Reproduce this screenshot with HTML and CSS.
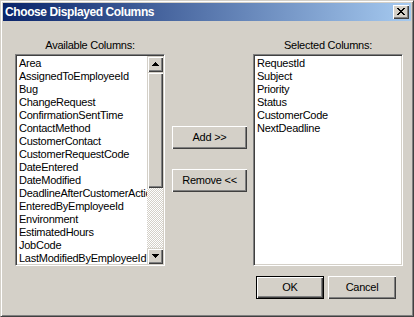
FILE: index.html
```html
<!DOCTYPE html>
<html>
<head>
<meta charset="utf-8">
<link rel="stylesheet" href="styles.css">
</head>
<body>
<div class="window">
  <div class="titlebar">
    <span class="title">Choose Displayed Columns</span>
    <div class="close"><svg width="8" height="7" viewBox="0 0 8 7" shape-rendering="crispEdges"><path d="M0 0h2v1H0zM6 0h2v1H6zM1 1h2v1H1zM5 1h2v1H5zM2 2h4v1H2zM3 3h2v1H3zM2 4h4v1H2zM1 5h2v1H1zM5 5h2v1H5zM0 6h2v1H0zM6 6h2v1H6z" fill="#000"/></svg></div>
  </div>
  <div class="body">
    <div class="columns">
      <div class="col">
        <div class="label">Available Columns:</div>
        <div class="listbox">
          <ul class="items">
            <li>Area</li>
            <li>AssignedToEmployeeId</li>
            <li>Bug</li>
            <li>ChangeRequest</li>
            <li>ConfirmationSentTime</li>
            <li>ContactMethod</li>
            <li>CustomerContact</li>
            <li>CustomerRequestCode</li>
            <li>DateEntered</li>
            <li>DateModified</li>
            <li>DeadlineAfterCustomerAction</li>
            <li>EnteredByEmployeeId</li>
            <li>Environment</li>
            <li>EstimatedHours</li>
            <li>JobCode</li>
            <li>LastModifiedByEmployeeId</li>
          </ul>
          <div class="scrollbar">
            <div class="sb-btn"><svg width="7" height="4" viewBox="0 0 7 4" shape-rendering="crispEdges"><path d="M3 0h1v1H3zM2 1h3v1H2zM1 2h5v1H1zM0 3h7v1H0z" fill="#000"/></svg></div>
            <div class="thumb"></div>
            <div class="track"></div>
            <div class="sb-btn"><svg width="7" height="4" viewBox="0 0 7 4" shape-rendering="crispEdges"><path d="M0 0h7v1H0zM1 1h5v1H1zM2 2h3v1H2zM3 3h1v1H3z" fill="#000"/></svg></div>
          </div>
        </div>
      </div>
      <div class="mid">
        <div class="btn">Add &gt;&gt;</div>
        <div class="btn">Remove &lt;&lt;</div>
      </div>
      <div class="col">
        <div class="label">Selected Columns:</div>
        <div class="listbox">
          <ul class="items">
            <li>RequestId</li>
            <li>Subject</li>
            <li>Priority</li>
            <li>Status</li>
            <li>CustomerCode</li>
            <li>NextDeadline</li>
          </ul>
        </div>
      </div>
    </div>
    <div class="footer">
      <div class="btn btn-default">OK</div>
      <div class="btn btn-small">Cancel</div>
    </div>
  </div>
</div>
</body>
</html>
```

FILE: styles.css
```css
html, body {
  margin: 0;
  padding: 0;
  background: #d4d0c8;
}
.window {
  width: 414px;
  height: 317px;
  box-sizing: border-box;
  border: 1px solid;
  border-color: #d4d0c8 #404040 #404040 #d4d0c8;
  box-shadow: inset 1px 1px #fff, inset -1px -1px #808080;
  padding: 2px;
  display: flex;
  flex-direction: column;
  background: #d4d0c8;
  font-family: "Liberation Sans", Arial, sans-serif;
  font-size: 11px;
  letter-spacing: -0.25px;
  color: #000;
}
.titlebar {
  height: 18px;
  flex: none;
  display: flex;
  align-items: center;
  justify-content: space-between;
  background: linear-gradient(to right, #0a246a, #a6caf0);
  padding: 0 2px 0 2px;
}
.title {
  color: #fff;
  font-weight: bold;
  font-size: 12px;
  letter-spacing: -0.4px;
  line-height: 18px;
}
.close {
  width: 16px;
  height: 14px;
  box-sizing: border-box;
  background: #d4d0c8;
  box-shadow: inset 1px 1px #fff, inset -1px -1px #404040, inset -2px -2px #808080;
  display: flex;
  align-items: center;
  justify-content: center;
  padding-bottom: 1px;
}
.close svg { display: block; }
.body {
  flex: 1;
  padding: 18px 8px 0 12px;
  display: flex;
  flex-direction: column;
}
.columns {
  display: flex;
}
.col {
  width: 150px;
  display: flex;
  flex-direction: column;
}
.label {
  line-height: 13px;
  height: 13px;
  text-align: center;
  margin-bottom: 2px;
}
.listbox {
  width: 150px;
  height: 212px;
  box-sizing: border-box;
  border: 1px solid;
  border-color: #808080 #fff #fff #808080;
  box-shadow: inset 1px 1px #404040, inset -1px -1px #d4d0c8;
  padding: 1px;
  background: #fff;
  display: flex;
}
.items {
  flex: 1;
  min-width: 0;
  margin: 0;
  padding: 1px 0 0 2px;
  list-style: none;
  line-height: 13px;
  white-space: nowrap;
  overflow: hidden;
}
.scrollbar {
  width: 16px;
  flex: none;
  display: flex;
  flex-direction: column;
}
.sb-btn, .thumb {
  background: #d4d0c8;
  box-shadow: inset 1px 1px #d4d0c8, inset 2px 2px #fff, inset -1px -1px #404040, inset -2px -2px #808080;
}
.sb-btn {
  height: 16px;
  display: flex;
  align-items: center;
  justify-content: center;
}
.sb-btn svg { display: block; }
.thumb {
  height: 116px;
}
.track {
  flex: 1;
  background-color: #d4d0c8;
  background-image: conic-gradient(#fff 25%, #d4d0c8 0 50%, #fff 0 75%, #d4d0c8 0);
  background-size: 2px 2px;
}
.mid {
  width: 75px;
  margin: 0 6px 0 7px;
  padding-top: 87px;
  display: flex;
  flex-direction: column;
  gap: 20px;
}
.btn {
  height: 23px;
  width: 75px;
  box-sizing: border-box;
  background: #d4d0c8;
  box-shadow: inset 1px 1px #fff, inset -1px -1px #404040, inset -2px -2px #808080;
  display: flex;
  align-items: center;
  justify-content: center;
  line-height: 13px;
}
.footer {
  margin-top: 10px;
  display: flex;
  justify-content: flex-end;
  gap: 4px;
  padding-right: 7px;
}
.btn-small { width: 68px; }
.btn-default {
  width: 68px;
  border: 1px solid #000;
  box-shadow: inset 1px 1px #fff, inset -1px -1px #404040, inset -2px -2px #808080;
}
```
